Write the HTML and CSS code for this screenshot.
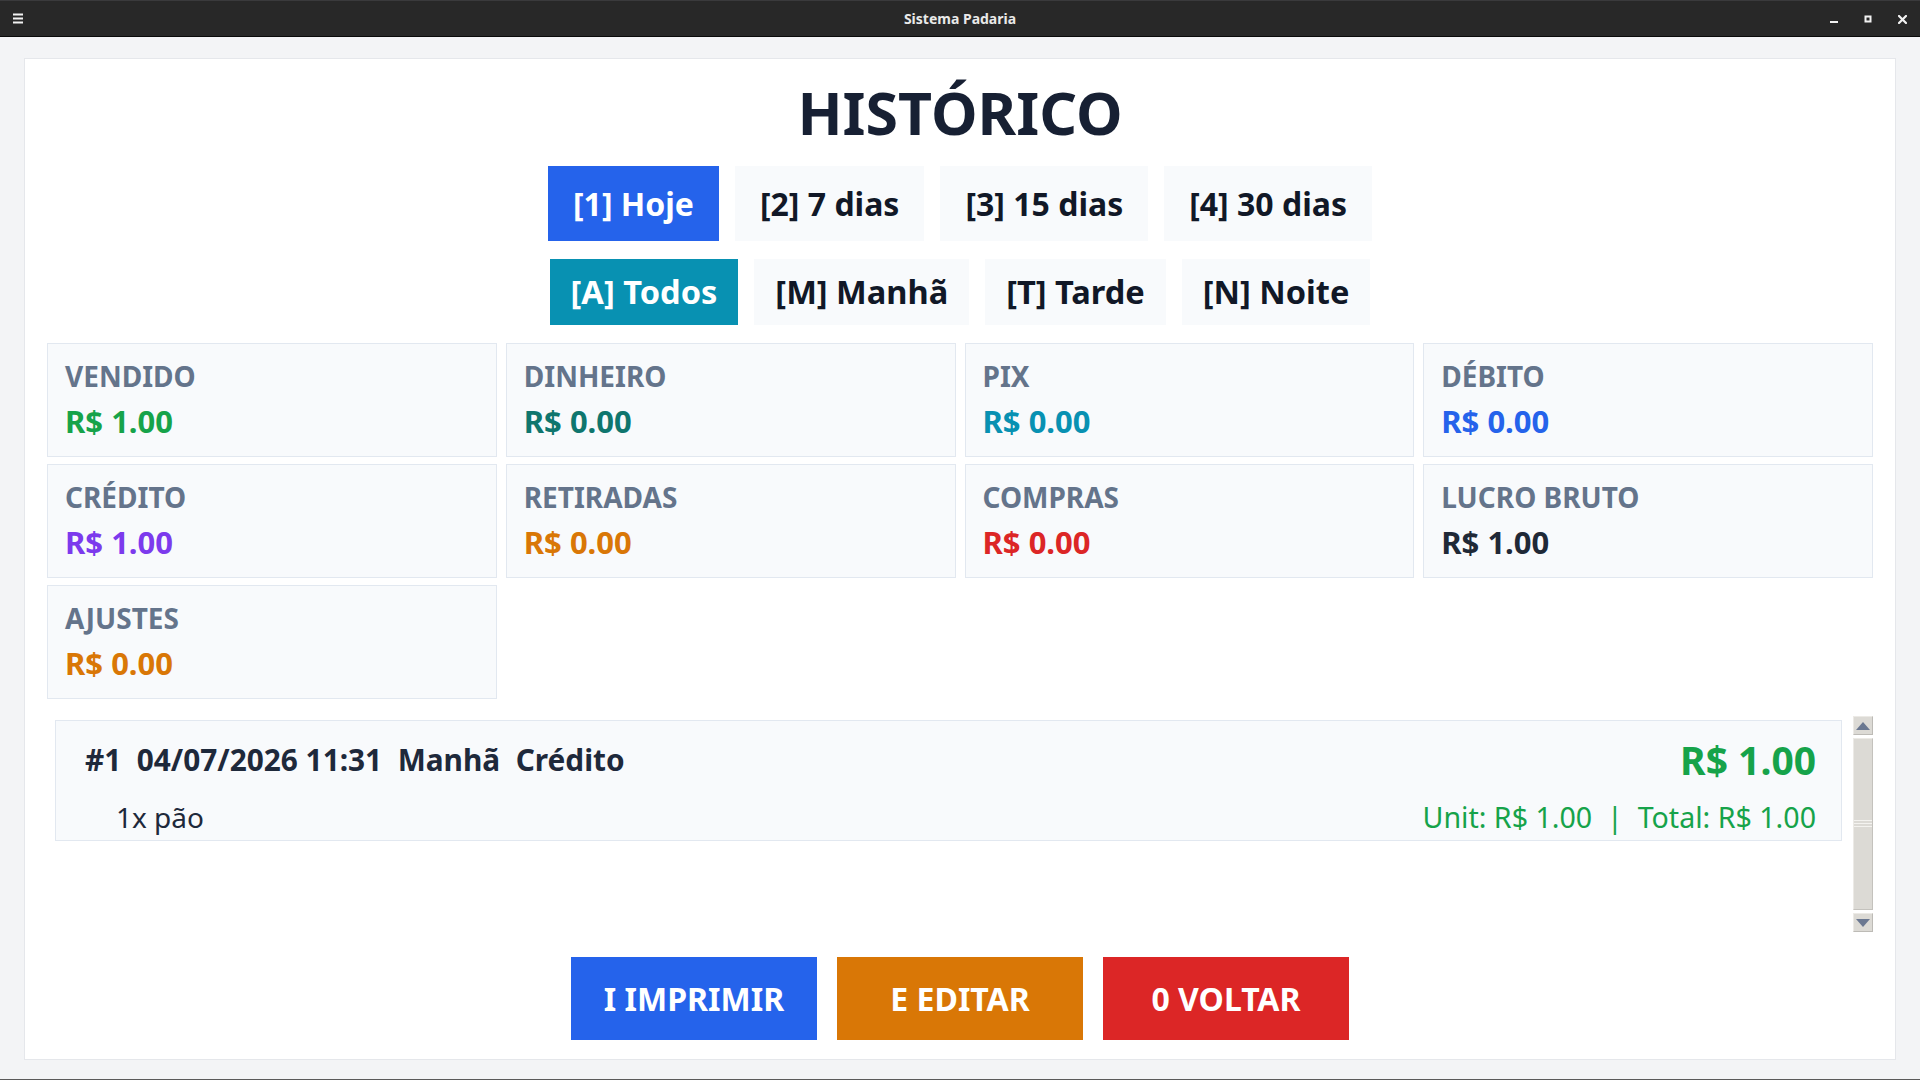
FILE: index.html
```html
<!DOCTYPE html>
<html lang="pt-BR">
<head>
  <meta charset="UTF-8">
  <meta name="viewport" content="width=device-width, initial-scale=1.0">
  <title>Sistema Padaria</title>
  <link rel="stylesheet" href="styles.css">
</head>
<body>
  <div class="titlebar">
    <div class="tb-left">
      <svg class="tb-menu" width="10" height="11" viewBox="0 0 10 11">
        <rect x="0" y="0.5" width="10" height="2" fill="#f2f2f2"/>
        <rect x="0" y="4.5" width="10" height="2" fill="#f2f2f2"/>
        <rect x="0" y="8.5" width="10" height="2" fill="#f2f2f2"/>
      </svg>
    </div>
    <div class="tb-title">Sistema Padaria</div>
    <div class="tb-controls">
      <span class="tb-btn">
        <svg width="8" height="8" viewBox="0 0 8 8"><rect x="0" y="6" width="8" height="2" fill="#f2f2f2"/></svg>
      </span>
      <span class="tb-btn">
        <svg width="8" height="8" viewBox="0 0 8 8"><rect x="1.5" y="1.5" width="5" height="5" fill="none" stroke="#f2f2f2" stroke-width="2"/></svg>
      </span>
      <span class="tb-btn">
        <svg width="9" height="9" viewBox="0 0 9 9"><path d="M1 1 L8 8 M8 1 L1 8" stroke="#f2f2f2" stroke-width="2.2" stroke-linecap="square"/></svg>
      </span>
    </div>
  </div>

  <div class="window">
    <div class="panel">
      <h1 class="title">HISTÓRICO</h1>

      <div class="tabs tabs-period">
        <button class="tab active">[1] Hoje</button>
        <button class="tab">[2] 7 dias</button>
        <button class="tab">[3] 15 dias</button>
        <button class="tab">[4] 30 dias</button>
      </div>

      <div class="tabs tabs-shift">
        <button class="tab active">[A] Todos</button>
        <button class="tab">[M] Manhã</button>
        <button class="tab">[T] Tarde</button>
        <button class="tab">[N] Noite</button>
      </div>

      <div class="stats">
        <div class="stat">
          <div class="stat-label">VENDIDO</div>
          <div class="stat-value green">R$ 1.00</div>
        </div>
        <div class="stat">
          <div class="stat-label">DINHEIRO</div>
          <div class="stat-value teal">R$ 0.00</div>
        </div>
        <div class="stat">
          <div class="stat-label">PIX</div>
          <div class="stat-value cyan">R$ 0.00</div>
        </div>
        <div class="stat">
          <div class="stat-label">DÉBITO</div>
          <div class="stat-value blue">R$ 0.00</div>
        </div>
        <div class="stat">
          <div class="stat-label">CRÉDITO</div>
          <div class="stat-value purple">R$ 1.00</div>
        </div>
        <div class="stat">
          <div class="stat-label">RETIRADAS</div>
          <div class="stat-value orange">R$ 0.00</div>
        </div>
        <div class="stat">
          <div class="stat-label">COMPRAS</div>
          <div class="stat-value red">R$ 0.00</div>
        </div>
        <div class="stat">
          <div class="stat-label">LUCRO BRUTO</div>
          <div class="stat-value dark">R$ 1.00</div>
        </div>
        <div class="stat">
          <div class="stat-label">AJUSTES</div>
          <div class="stat-value orange">R$ 0.00</div>
        </div>
      </div>

      <div class="list">
        <div class="list-canvas">
          <div class="sale">
            <div class="sale-row">
              <span class="sale-head">#1  04/07/2026 11:31  Manhã  Crédito</span>
              <span class="sale-total">R$ 1.00</span>
            </div>
            <div class="sale-row sale-line">
              <span class="sale-item">1x pão</span>
              <span class="sale-detail">Unit: R$ 1.00  |  Total: R$ 1.00</span>
            </div>
          </div>
        </div>
        <div class="scrollbar">
          <div class="sb-arrow">
            <svg width="14" height="8" viewBox="0 0 14 8"><path d="M0 8 L7 0 L14 8 Z" fill="#6b7891"/></svg>
          </div>
          <div class="sb-thumb">
            <span class="sb-grip"></span>
          </div>
          <div class="sb-arrow">
            <svg width="14" height="8" viewBox="0 0 14 8"><path d="M0 0 L14 0 L7 8 Z" fill="#6b7891"/></svg>
          </div>
        </div>
      </div>

      <div class="actions">
        <button class="action action-print">I IMPRIMIR</button>
        <button class="action action-edit">E EDITAR</button>
        <button class="action action-back">0 VOLTAR</button>
      </div>
    </div>
  </div>
</body>
</html>
```

FILE: styles.css
```css
html, body {
  margin: 0;
  height: 100%;
}
body {
  font-family: "Noto Sans", "Open Sans", sans-serif;
  background: #f3f4f6;
  color: #1e293b;
  display: flex;
  flex-direction: column;
  overflow: hidden;
  border-bottom: 1px solid #5a5a5a;
  box-sizing: border-box;
}

/* window title bar */
.titlebar {
  height: 35px;
  flex: none;
  display: grid;
  grid-template-columns: 1fr auto 1fr;
  align-items: center;
  background: #282828;
  border-top: 1px solid #3a3a3c;
  border-bottom: 1px solid #0a0a0a;
  box-sizing: content-box;
}
.tb-left {
  padding-left: 13px;
  display: flex;
  align-items: center;
}
.tb-menu {
  display: block;
}
.tb-title {
  font-size: 14px;
  font-weight: 700;
  color: #e9e9e9;
}
.tb-controls {
  display: flex;
  justify-content: flex-end;
  padding-right: 1px;
}
.tb-btn {
  width: 34px;
  display: flex;
  justify-content: center;
  align-items: center;
  padding-top: 1px;
}
.tb-btn svg {
  display: block;
}

/* main panel */
.window {
  flex: 1;
  padding: 21px 24px 19px;
  display: flex;
  flex-direction: column;
}
.panel {
  flex: 1;
  background: #fff;
  border: 1px solid #e5e7eb;
  padding: 14px 22px 19px;
  display: flex;
  flex-direction: column;
}
.title {
  margin: 0;
  text-align: center;
  font-size: 59px;
  line-height: 79px;
  font-weight: 700;
  color: #172033;
}

.tabs {
  display: flex;
  justify-content: center;
  gap: 16px;
}
.tabs-period {
  margin-top: 14px;
}
.tabs-shift {
  margin-top: 18px;
}
.tab {
  font-family: inherit;
  font-size: 32px;
  font-weight: 700;
  line-height: 43px;
  border: 0;
  border-radius: 0;
  background: #f8fafc;
  color: #111827;
  padding: 16px 25px;
  cursor: pointer;
}
.tabs-shift .tab {
  font-size: 32.6px;
  line-height: 44px;
  padding: 11px 21px;
}
.tabs-period .tab.active {
  background: #2563eb;
  color: #fff;
}
.tabs-shift .tab.active {
  background: #0891b2;
  color: #fff;
}

/* summary cards */
.stats {
  margin-top: 18px;
  display: grid;
  grid-template-columns: repeat(4, 1fr);
  column-gap: 9px;
  row-gap: 7px;
}
.stat {
  background: #f8fafc;
  border: 1px solid #e2e8f0;
  padding: 13px 17px 14px;
}
.stat-label {
  font-size: 28px;
  line-height: 38px;
  font-weight: 700;
  color: #64748b;
}
.stat-value {
  margin-top: 5px;
  font-size: 31px;
  line-height: 42px;
  font-weight: 700;
}
.green { color: #16a34a; }
.teal { color: #0f766e; }
.cyan { color: #0891b2; }
.blue { color: #2563eb; }
.purple { color: #7c3aed; }
.orange { color: #d97706; }
.red { color: #dc2626; }
.dark { color: #1f2937; }

/* sales list */
.list {
  margin-top: 17px;
  height: 216px;
  display: flex;
}
.list-canvas {
  flex: 1;
  padding: 4px 0 0 8px;
}
.sale {
  background: #f8fafc;
  border: 1px solid #e2e8f0;
  padding: 12px 25px 4px 29px;
}
.sale-row {
  display: flex;
  justify-content: space-between;
  align-items: center;
}
.sale-line {
  margin-top: 12px;
}
.sale-head {
  white-space: pre;
  font-size: 29.8px;
  line-height: 41px;
  font-weight: 700;
  color: #1e293b;
}
.sale-total {
  font-size: 39px;
  line-height: 53px;
  font-weight: 700;
  color: #16a34a;
}
.sale-item {
  padding-left: 31px;
  font-size: 28px;
  line-height: 38px;
  color: #1e293b;
}
.sale-detail {
  white-space: pre;
  font-size: 28.6px;
  line-height: 38px;
  color: #16a34a;
}

.scrollbar {
  width: 20px;
  margin-left: 11px;
  display: flex;
  flex-direction: column;
  gap: 3px;
}
.sb-arrow {
  height: 19px;
  background: #dcdad5;
  border: 1px solid #eceae6;
  border-right-color: #bdbbb6;
  border-bottom-color: #bdbbb6;
  box-sizing: border-box;
  display: flex;
  justify-content: center;
  align-items: center;
}
.sb-thumb {
  flex: 1;
  background: #dcdad5;
  border: 1px solid #eceae6;
  border-right-color: #c4c2bd;
  border-bottom-color: #c4c2bd;
  display: flex;
  align-items: center;
  justify-content: center;
}
.sb-grip {
  width: 100%;
  height: 9px;
  background: repeating-linear-gradient(#f4f3f0 0 1px, #dcdad5 1px 3px);
}

/* bottom actions */
.actions {
  margin-top: 25px;
  display: flex;
  justify-content: center;
  gap: 20px;
}
.action {
  width: 246px;
  height: 83px;
  border: 0;
  border-radius: 0;
  font-family: inherit;
  font-size: 32px;
  font-weight: 700;
  color: #fff;
  cursor: pointer;
}
.action-print { background: #2563eb; }
.action-edit { background: #d97706; }
.action-back { background: #dc2626; }
```
